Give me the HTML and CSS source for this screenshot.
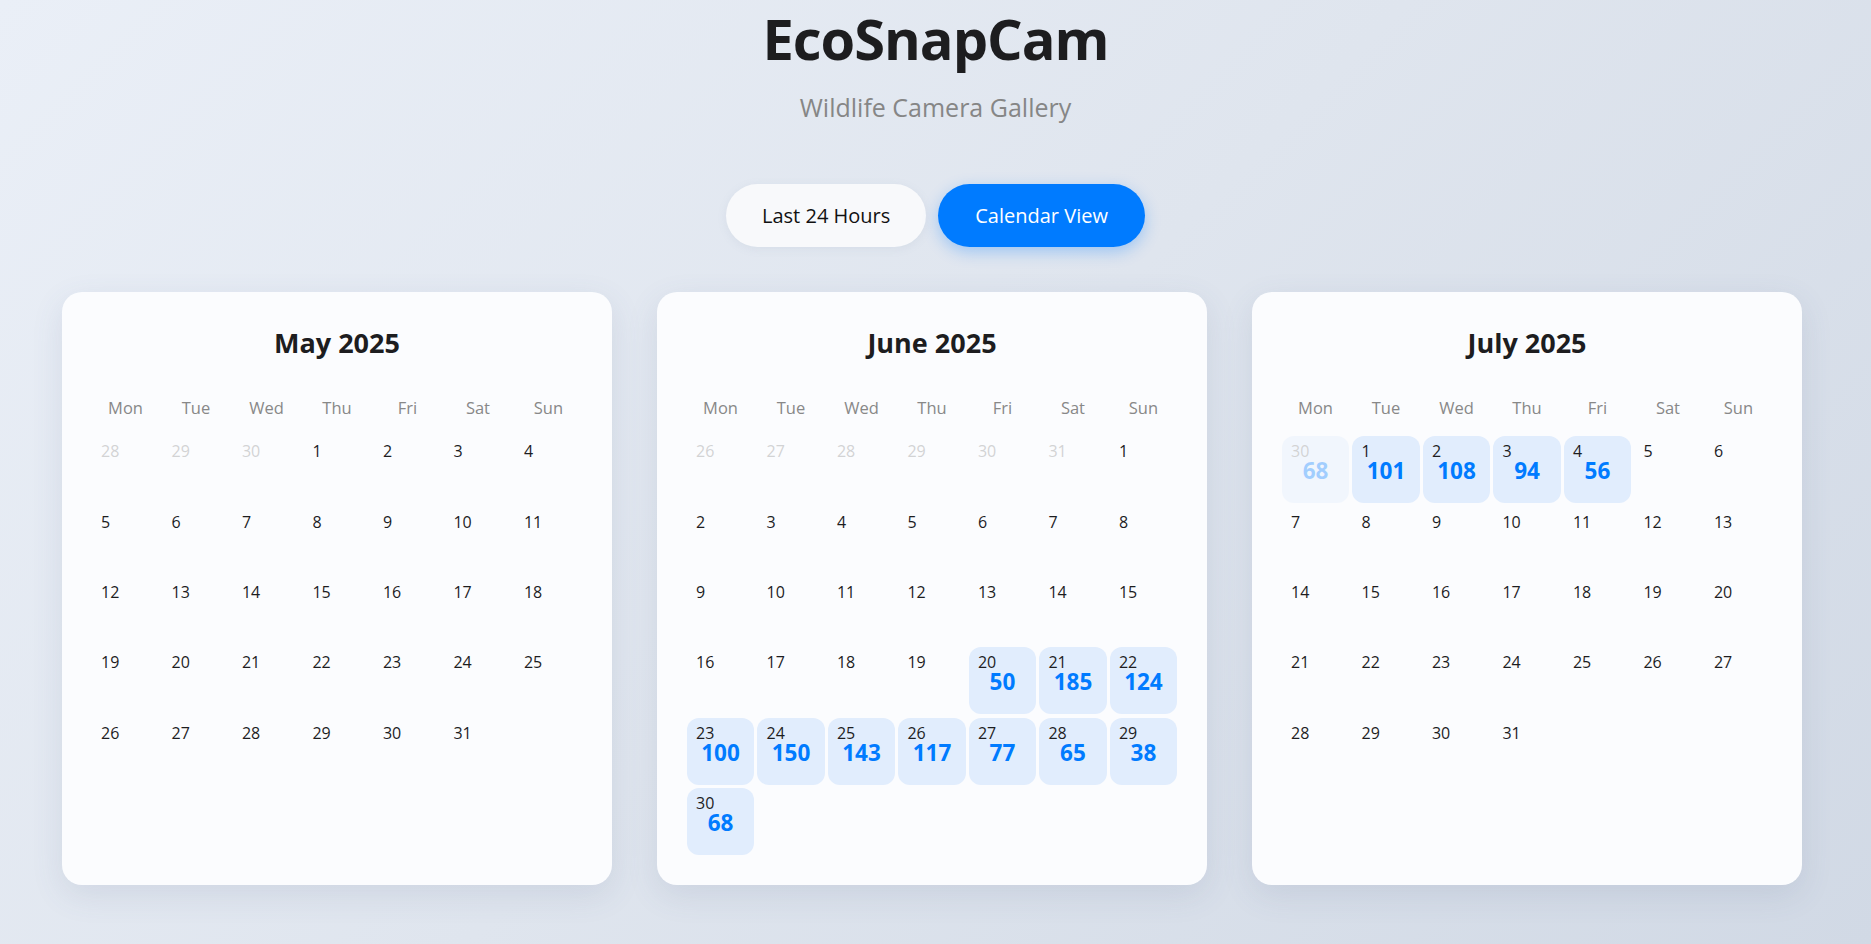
FILE: index.html
```html
<!DOCTYPE html>
<html lang="en">
<head>
<meta charset="utf-8">
<title>EcoSnapCam</title>
<link rel="stylesheet" href="styles.css">
</head>
<body>
<header class="header">
  <h1 class="title">EcoSnapCam</h1>
  <p class="subtitle">Wildlife Camera Gallery</p>
</header>
<nav class="tabs">
  <button class="tab">Last 24 Hours</button>
  <button class="tab tab-active">Calendar View</button>
</nav>
<main class="months">
  <section class="card">
    <h2 class="month-title">May 2025</h2>
    <div class="weekdays"><span>Mon</span><span>Tue</span><span>Wed</span><span>Thu</span><span>Fri</span><span>Sat</span><span>Sun</span></div>
    <div class="days">
      <div class="day other"><span class="num">28</span></div>
      <div class="day other"><span class="num">29</span></div>
      <div class="day other"><span class="num">30</span></div>
      <div class="day"><span class="num">1</span></div>
      <div class="day"><span class="num">2</span></div>
      <div class="day"><span class="num">3</span></div>
      <div class="day"><span class="num">4</span></div>
      <div class="day"><span class="num">5</span></div>
      <div class="day"><span class="num">6</span></div>
      <div class="day"><span class="num">7</span></div>
      <div class="day"><span class="num">8</span></div>
      <div class="day"><span class="num">9</span></div>
      <div class="day"><span class="num">10</span></div>
      <div class="day"><span class="num">11</span></div>
      <div class="day"><span class="num">12</span></div>
      <div class="day"><span class="num">13</span></div>
      <div class="day"><span class="num">14</span></div>
      <div class="day"><span class="num">15</span></div>
      <div class="day"><span class="num">16</span></div>
      <div class="day"><span class="num">17</span></div>
      <div class="day"><span class="num">18</span></div>
      <div class="day"><span class="num">19</span></div>
      <div class="day"><span class="num">20</span></div>
      <div class="day"><span class="num">21</span></div>
      <div class="day"><span class="num">22</span></div>
      <div class="day"><span class="num">23</span></div>
      <div class="day"><span class="num">24</span></div>
      <div class="day"><span class="num">25</span></div>
      <div class="day"><span class="num">26</span></div>
      <div class="day"><span class="num">27</span></div>
      <div class="day"><span class="num">28</span></div>
      <div class="day"><span class="num">29</span></div>
      <div class="day"><span class="num">30</span></div>
      <div class="day"><span class="num">31</span></div>
    </div>
  </section>
  <section class="card">
    <h2 class="month-title">June 2025</h2>
    <div class="weekdays"><span>Mon</span><span>Tue</span><span>Wed</span><span>Thu</span><span>Fri</span><span>Sat</span><span>Sun</span></div>
    <div class="days">
      <div class="day other"><span class="num">26</span></div>
      <div class="day other"><span class="num">27</span></div>
      <div class="day other"><span class="num">28</span></div>
      <div class="day other"><span class="num">29</span></div>
      <div class="day other"><span class="num">30</span></div>
      <div class="day other"><span class="num">31</span></div>
      <div class="day"><span class="num">1</span></div>
      <div class="day"><span class="num">2</span></div>
      <div class="day"><span class="num">3</span></div>
      <div class="day"><span class="num">4</span></div>
      <div class="day"><span class="num">5</span></div>
      <div class="day"><span class="num">6</span></div>
      <div class="day"><span class="num">7</span></div>
      <div class="day"><span class="num">8</span></div>
      <div class="day"><span class="num">9</span></div>
      <div class="day"><span class="num">10</span></div>
      <div class="day"><span class="num">11</span></div>
      <div class="day"><span class="num">12</span></div>
      <div class="day"><span class="num">13</span></div>
      <div class="day"><span class="num">14</span></div>
      <div class="day"><span class="num">15</span></div>
      <div class="day"><span class="num">16</span></div>
      <div class="day"><span class="num">17</span></div>
      <div class="day"><span class="num">18</span></div>
      <div class="day"><span class="num">19</span></div>
      <div class="day has"><span class="num">20</span><span class="count">50</span></div>
      <div class="day has"><span class="num">21</span><span class="count">185</span></div>
      <div class="day has"><span class="num">22</span><span class="count">124</span></div>
      <div class="day has"><span class="num">23</span><span class="count">100</span></div>
      <div class="day has"><span class="num">24</span><span class="count">150</span></div>
      <div class="day has"><span class="num">25</span><span class="count">143</span></div>
      <div class="day has"><span class="num">26</span><span class="count">117</span></div>
      <div class="day has"><span class="num">27</span><span class="count">77</span></div>
      <div class="day has"><span class="num">28</span><span class="count">65</span></div>
      <div class="day has"><span class="num">29</span><span class="count">38</span></div>
      <div class="day has"><span class="num">30</span><span class="count">68</span></div>
    </div>
  </section>
  <section class="card">
    <h2 class="month-title">July 2025</h2>
    <div class="weekdays"><span>Mon</span><span>Tue</span><span>Wed</span><span>Thu</span><span>Fri</span><span>Sat</span><span>Sun</span></div>
    <div class="days">
      <div class="day has other"><span class="num">30</span><span class="count">68</span></div>
      <div class="day has"><span class="num">1</span><span class="count">101</span></div>
      <div class="day has"><span class="num">2</span><span class="count">108</span></div>
      <div class="day has"><span class="num">3</span><span class="count">94</span></div>
      <div class="day has"><span class="num">4</span><span class="count">56</span></div>
      <div class="day"><span class="num">5</span></div>
      <div class="day"><span class="num">6</span></div>
      <div class="day"><span class="num">7</span></div>
      <div class="day"><span class="num">8</span></div>
      <div class="day"><span class="num">9</span></div>
      <div class="day"><span class="num">10</span></div>
      <div class="day"><span class="num">11</span></div>
      <div class="day"><span class="num">12</span></div>
      <div class="day"><span class="num">13</span></div>
      <div class="day"><span class="num">14</span></div>
      <div class="day"><span class="num">15</span></div>
      <div class="day"><span class="num">16</span></div>
      <div class="day"><span class="num">17</span></div>
      <div class="day"><span class="num">18</span></div>
      <div class="day"><span class="num">19</span></div>
      <div class="day"><span class="num">20</span></div>
      <div class="day"><span class="num">21</span></div>
      <div class="day"><span class="num">22</span></div>
      <div class="day"><span class="num">23</span></div>
      <div class="day"><span class="num">24</span></div>
      <div class="day"><span class="num">25</span></div>
      <div class="day"><span class="num">26</span></div>
      <div class="day"><span class="num">27</span></div>
      <div class="day"><span class="num">28</span></div>
      <div class="day"><span class="num">29</span></div>
      <div class="day"><span class="num">30</span></div>
      <div class="day"><span class="num">31</span></div>
    </div>
  </section>
</main>
</body>
</html>
```
FILE: styles.css
```css
* { box-sizing: border-box; }

html, body { height: 100%; }

body {
  margin: 0;
  min-height: 100vh;
  font-family: "Open Sans", "Noto Sans", sans-serif;
  color: #1d1d1f;
  background: linear-gradient(135deg, #eaeff7 0%, #dfe5ee 50%, #d1d9e5 100%);
  overflow: hidden;
}

.header {
  text-align: center;
  padding-top: 5px;
}

.title {
  margin: 0;
  font-size: 56px;
  line-height: 1.2;
  font-weight: 700;
  letter-spacing: -1px;
  color: #1d1d1f;
}

.subtitle {
  margin: 18px 0 0;
  font-size: 25px;
  line-height: 35px;
  color: #868686;
}

.tabs {
  display: flex;
  justify-content: center;
  gap: 12px;
  margin-top: 59px;
}

.tab {
  height: 63px;
  padding: 0 36px;
  border: none;
  border-radius: 32px;
  font-family: "Open Sans", "Noto Sans", sans-serif;
  font-size: 20px;
  color: #111;
  background: #f8f9fb;
  box-shadow: 0 2px 10px rgba(120, 140, 170, 0.10);
  cursor: pointer;
}

.tab-active {
  padding: 0 37px;
  color: #fff;
  background: #007bff;
  box-shadow: 0 5px 16px rgba(0, 123, 255, 0.30);
}

.months {
  display: grid;
  grid-template-columns: repeat(3, 550px);
  gap: 45px;
  margin-top: 45px;
  padding-left: 62px;
}

.card {
  background: #fbfcfe;
  border-radius: 20px;
  padding: 30px;
  box-shadow: 0 10px 32px rgba(70, 90, 130, 0.12);
}

.month-title {
  margin: 0 0 24px;
  text-align: center;
  font-size: 27px;
  line-height: 42px;
  font-weight: 700;
  color: #1d1d1f;
}

.weekdays {
  display: grid;
  grid-template-columns: repeat(7, 1fr);
  gap: 3.4px;
  height: 40px;
  line-height: 40px;
  margin-bottom: 8px;
  text-align: center;
  font-size: 16.5px;
  color: #888;
}

.days {
  display: grid;
  grid-template-columns: repeat(7, 1fr);
  grid-auto-rows: 67px;
  gap: 3.4px;
}

.day {
  display: flex;
  flex-direction: column;
  padding: 7px 9px 0;
  border-radius: 12px;
  color: #1d1d1f;
}

.num {
  font-size: 16px;
  line-height: 16px;
}

.day.other { opacity: 0.35; }
.day.other .num { color: #888; }

.day.has {
  background: #e1edfd;
}

.count {
  align-self: center;
  margin-top: 1px;
  font-size: 22.5px;
  line-height: 22px;
  font-weight: 700;
  color: #007bff;
}
```
